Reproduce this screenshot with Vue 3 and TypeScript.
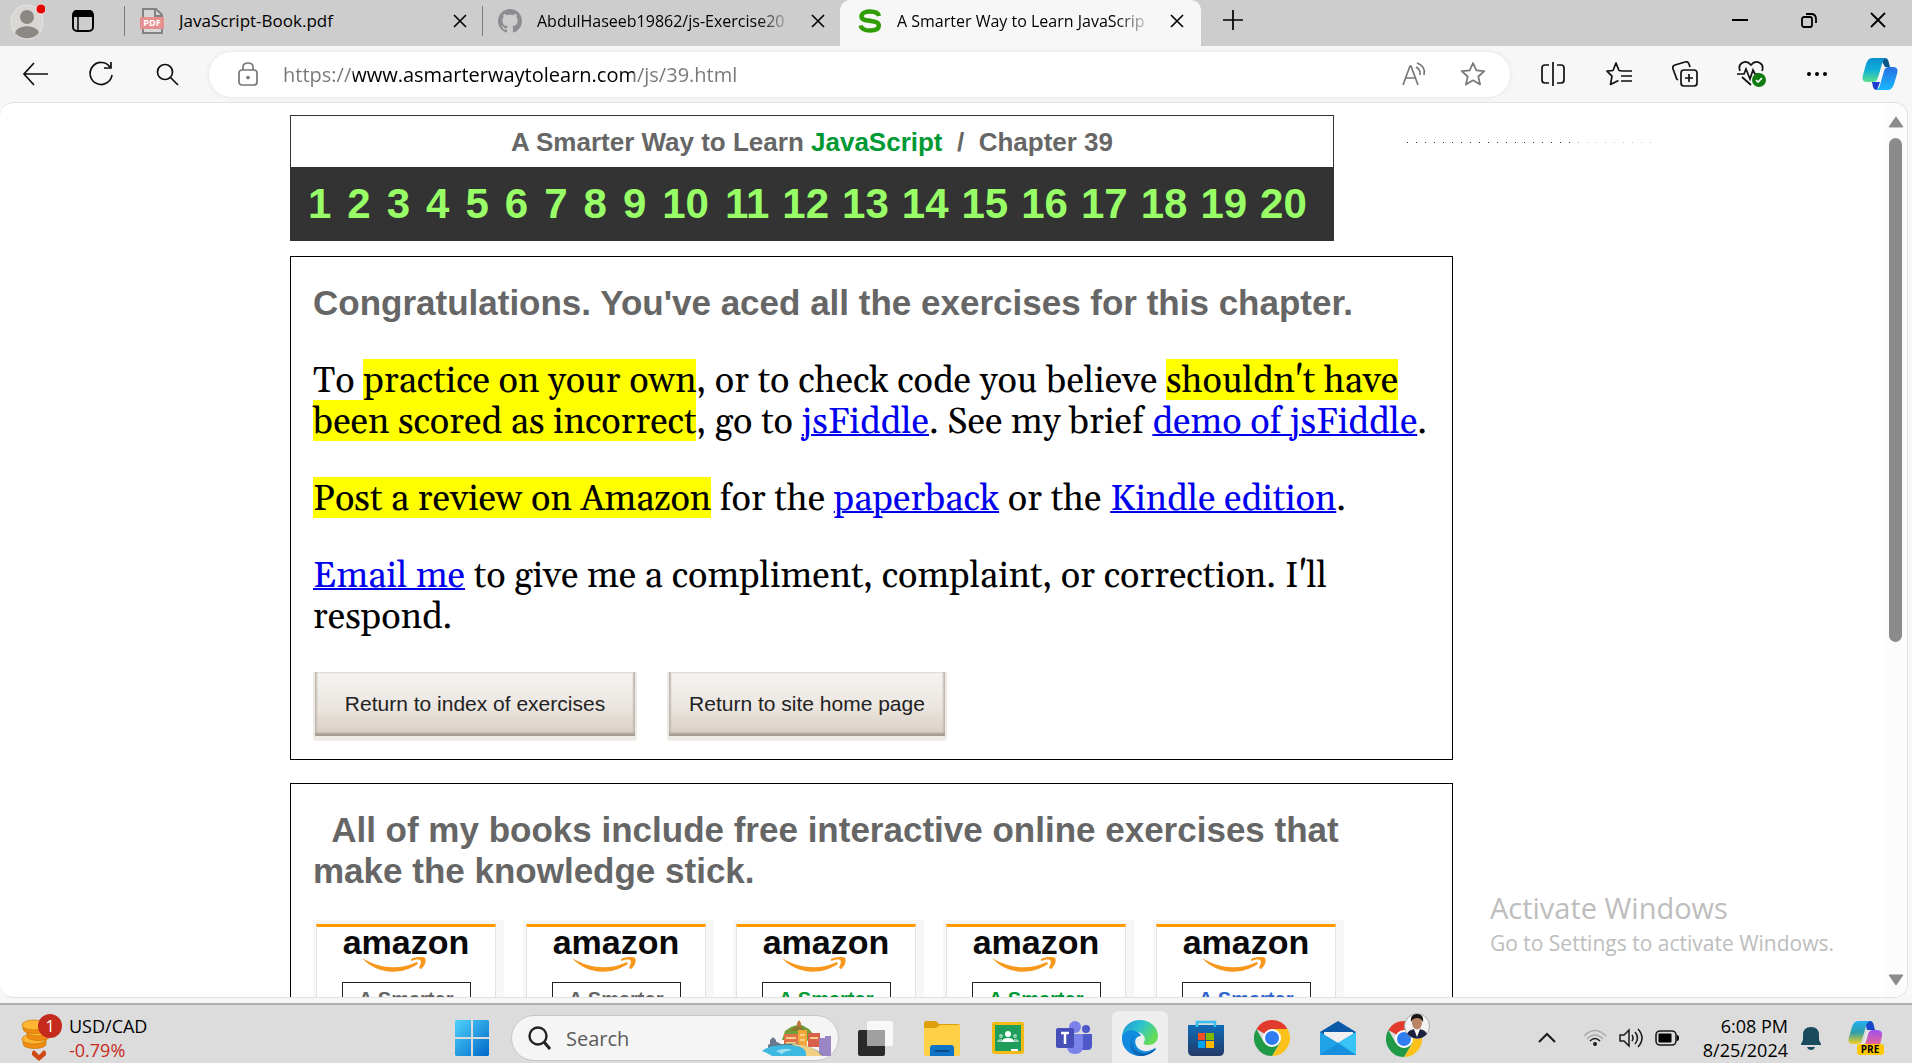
<script setup lang="ts">
import { ref } from 'vue'

interface Book {
  id: number
  tone: string
}

const exercises: number[] = Array.from({ length: 20 }, (_, i) => i + 1)
const address = ref('https://www.asmarterwaytolearn.com/js/39.html')
const query = ref('')
const books: Book[] = [
  { id: 1, tone: 'grey' },
  { id: 2, tone: 'grey' },
  { id: 3, tone: 'green' },
  { id: 4, tone: 'green' },
  { id: 5, tone: 'blue' },
]
</script>

<template>
  <div class="desktop">
    <header class="tabstrip">
      <button class="profile" aria-label="Profile">
        <svg width="44" height="44" viewBox="0 0 44 44">
          <ellipse cx="26" cy="22" rx="16" ry="17" fill="#d9d7d4" stroke="#e8e6e3" />
          <ellipse cx="26" cy="17" rx="7" ry="7" fill="#8c8884" />
          <path d="M14 33c2-9 22-9 24 0-6 7-18 7-24 0z" fill="#8c8884" />
          <circle cx="40" cy="9" r="5" fill="#e60000" stroke="#f0dede" />
        </svg>
      </button>
      <button class="tab-actions" aria-label="Tab actions">
        <svg width="24" height="24" viewBox="0 0 24 24">
          <rect x="2" y="2" width="20" height="20" rx="4" fill="none" stroke="#000" stroke-width="2" />
          <path d="M2 8V5q0-4 4-4h12q4 0 4 4v3z" />
          <path d="M7 8v14" stroke="#000" stroke-width="1.5" />
        </svg>
      </button>
      <nav class="tabs" aria-label="Tabs">
        <div class="tab">
          <svg width="24" height="26" viewBox="0 0 24 26">
            <path d="M3 1h13l6 6v18H3z" fill="#d6d6d6" stroke="#838383" stroke-width="2" />
            <path d="M15 1v7h7" fill="none" stroke="#838383" stroke-width="2" />
            <rect x="0" y="9" width="24" height="12" rx="1" fill="#e58f8f" />
            <text x="12" y="18" text-anchor="middle" font-size="9" font-weight="700" fill="#fff" font-family="Open Sans, sans-serif">PDF</text>
          </svg>
          <span class="tab-title">JavaScript-Book.pdf</span>
          <button class="close" aria-label="Close tab">
            <svg width="14" height="14" viewBox="0 0 14 14"><path d="M1 1l12 12M13 1L1 13" /></svg>
          </button>
        </div>
        <div class="tab">
          <svg width="24" height="24" viewBox="0 0 16 16">
            <path fill="#8b8d90" d="M8 0C3.58 0 0 3.58 0 8c0 3.54 2.29 6.53 5.47 7.59.4.07.55-.17.55-.38 0-.19-.01-.82-.01-1.49-2.01.37-2.53-.49-2.69-.94-.09-.23-.48-.94-.82-1.13-.28-.15-.68-.52-.01-.53.63-.01 1.08.58 1.23.82.72 1.21 1.87.87 2.33.66.07-.52.28-.87.51-1.07-1.78-.2-3.64-.89-3.64-3.95 0-.87.31-1.59.82-2.15-.08-.2-.36-1.02.08-2.12 0 0 .67-.21 2.2.82.64-.18 1.32-.27 2-.27s1.36.09 2 .27c1.53-1.04 2.2-.82 2.2-.82.44 1.1.16 1.92.08 2.12.51.56.82 1.27.82 2.15 0 3.07-1.87 3.75-3.65 3.95.29.25.54.73.54 1.48 0 1.07-.01 1.93-.01 2.2 0 .21.15.46.55.38A8.01 8.01 0 0 0 16 8c0-4.42-3.58-8-8-8z" />
          </svg>
          <span class="tab-title faded">AbdulHaseeb19862/js-Exercise20</span>
          <button class="close" aria-label="Close tab">
            <svg width="14" height="14" viewBox="0 0 14 14"><path d="M1 1l12 12M13 1L1 13" /></svg>
          </button>
        </div>
        <div class="tab active">
          <svg width="24" height="24" viewBox="0 0 24 24">
            <path d="M21 7C20 3 16 2.500 12 2.500S3.500 4 3.500 7.500 7 11 12 11.800s8.800 1.200 8.800 5-4 4.700-8.800 4.700S3.500 20 2.500 16.500" fill="none" stroke="#2f9e06" stroke-width="4.500" />
          </svg>
          <span class="tab-title faded">A Smarter Way to Learn JavaScrip</span>
          <button class="close" aria-label="Close tab">
            <svg width="14" height="14" viewBox="0 0 14 14"><path d="M1 1l12 12M13 1L1 13" /></svg>
          </button>
        </div>
      </nav>
      <button class="new-tab" aria-label="New tab">
        <svg width="22" height="22" viewBox="0 0 22 22"><path d="M11 1v20M1 11h20" stroke="#000" stroke-width="1.700" /></svg>
      </button>
      <div class="window-buttons">
        <button aria-label="Minimize">
          <svg width="16" height="16" viewBox="0 0 16 16"><path d="M0 8h16" stroke="#000" stroke-width="2" /></svg>
        </button>
        <button aria-label="Restore">
          <svg width="16" height="16" viewBox="0 0 16 16" fill="none" stroke="#000" stroke-width="1.800">
            <rect x="1" y="5" width="10" height="10" rx="2" /><path d="M5 2h5q5 0 5 5v4" />
          </svg>
        </button>
        <button aria-label="Close window">
          <svg width="16" height="16" viewBox="0 0 16 16"><path d="M1 1l14 14M15 1L1 15" stroke="#000" stroke-width="1.800" /></svg>
        </button>
      </div>
    </header>

    <div class="toolbar">
      <button aria-label="Back">
        <svg width="26" height="24" viewBox="0 0 26 24"><path d="M12 1L2 12l10 11M2 12h24" /></svg>
      </button>
      <button aria-label="Refresh">
        <svg width="26" height="26" viewBox="0 0 26 26"><path d="M22 6A11 11 0 1 0 24 14M23 1v6h-7" /></svg>
      </button>
      <button aria-label="Search the page">
        <svg width="24" height="24" viewBox="0 0 24 24"><circle cx="10" cy="10" r="7.500" /><path d="M15 15l8 8" /></svg>
      </button>
      <div class="omnibox">
        <svg class="dim" width="20" height="24" viewBox="0 0 20 24">
          <rect x="1" y="8" width="18" height="15" rx="3" /><path d="M5 8V5q0-4 5-4t5 4v3" /><circle cx="10" cy="15.500" r="1" fill="#666" />
        </svg>
        <input v-model="address" class="url" type="text" aria-label="Address" spellcheck="false" />
        <button aria-label="Read aloud">
          <svg class="dim" width="26" height="24" viewBox="0 0 26 24"><path d="M1 23L8 4h1l7 19M4 16h9M14 5q5 3 4 8M15 1q9 3 7 12" /></svg>
        </button>
        <button aria-label="Add to favorites">
          <svg class="dim" width="26" height="26" viewBox="0 0 26 26"><path d="M13 2l3.300 7.300 8 .8-6 5.400 1.800 8L13 19.300 5.900 23.500l1.800-8-6-5.400 8-.8z" stroke-linejoin="round" /></svg>
        </button>
      </div>
      <div class="tools">
        <button aria-label="Split screen">
          <svg width="26" height="26" viewBox="0 0 26 26"><path d="M9 4H5Q2 4 2 7v12q0 3 3 3h4M17 4h4q3 0 3 3v12q0 3-3 3h-4M13 1v24" /></svg>
        </button>
        <button aria-label="Favorites">
          <svg width="26" height="26" viewBox="0 0 26 26"><path d="M16 10l-3-.500L10 2 7 9.500l-6 .600 5 5-1.500 8.400 8-4M15 10h11M15 15h11M15 20h11" stroke-linejoin="round" /></svg>
        </button>
        <button aria-label="Collections">
          <svg width="26" height="26" viewBox="0 0 26 26"><rect x="9" y="9" width="16" height="16" rx="3" /><path d="M17 13v8M13 17h8M6 19q-2-1-2-3L1 8q-1-3 2-4l10-3q3-1 4 2l1 3" /></svg>
        </button>
        <button aria-label="Browser essentials">
          <svg width="30" height="28" viewBox="0 0 30 28">
            <path d="M4 11C1 3 10-1 15 5c5-6 14-2 11 6M1 14h7l2-5 4 10 3-9 2 4h4M6 17l9 8" />
            <circle cx="23" cy="20" r="7" fill="#107c10" stroke="none" /><path d="M20 20l2 2 4-4" stroke="#fff" />
          </svg>
        </button>
        <button aria-label="Settings and more">
          <svg width="22" height="6" viewBox="0 0 22 6"><g fill="#000" stroke="none"><circle cx="3" cy="3" r="2" /><circle cx="11" cy="3" r="2" /><circle cx="19" cy="3" r="2" /></g></svg>
        </button>
        <button aria-label="Copilot">
          <svg class="copilot" width="36" height="34" viewBox="0 0 36 34">
            <defs>
              <linearGradient id="cpA" x2="0" y2="1"><stop stop-color="#0a8fd0" /><stop offset=".5" stop-color="#10b0d8" /><stop offset="1" stop-color="#5fe08a" /></linearGradient>
              <linearGradient id="cpB" x2="0" y2="1"><stop stop-color="#2a6fe0" /><stop offset="1" stop-color="#18b8ff" /></linearGradient>
            </defs>
            <path d="M18 1h5q3 0 4 5l1 4h-5z" fill="#0b5a8c" />
            <path d="M10 25h8l-3 8q-3 0-4-3z" fill="#1a3fd0" />
            <path d="M10 1h14q-3 1-4 6l-4 14q-1 4-5 4H5q-6 0-4-7L4 7q2-6 6-6z" fill="url(#cpA)" />
            <path d="M26 33H14q3-1 4-5l4-14q1-4 5-4h4q6 0 4 7l-3 10q-2 6-6 6z" fill="url(#cpB)" />
            <path d="M20 10h4q-2 1-3 4l-2 7q-1 4-4 4h-2q2-1 3-4z" fill="#f7f7f7" />
          </svg>
        </button>
      </div>
    </div>

    <div class="viewport">
      <main class="page">
        <div class="column">
          <section class="banner">
            <h1>A Smarter Way to Learn <b>JavaScript</b>&nbsp; / &nbsp;Chapter 39</h1>
            <nav class="numbers" aria-label="Exercises">
              <a v-for="n in exercises" :key="n" href="#" :class="{ wide: n > 10 }">{{ n }}</a>
            </nav>
          </section>

          <section class="panel done">
            <h2>Congratulations. You've aced all the exercises for this chapter.</h2>
            <div class="notes">
              <p>
                To <mark>practice on your own</mark>, or to check code you believe <mark>shouldn't have been scored as
                incorrect</mark>, go to <a href="#">jsFiddle</a>. See my brief <a href="#">demo of jsFiddle</a>.
              </p>
              <p><mark>Post a review on Amazon</mark> for the <a href="#">paperback</a> or the <a href="#">Kindle edition</a>.</p>
              <p><a href="#">Email me</a> to give me a compliment, complaint, or correction. I'll respond.</p>
            </div>
            <div class="actions">
              <button class="index">Return to index of exercises</button>
              <button class="home">Return to site home page</button>
            </div>
          </section>

          <section class="panel books">
            <h2>&nbsp; All of my books include free interactive online exercises that make the knowledge stick.</h2>
            <div class="shelf">
              <a v-for="book in books" :key="book.id" href="#" class="frame">
                <span class="card">
                  <span class="amazon">amazon</span>
                  <svg class="smile" width="64" height="15" viewBox="0 0 64 15" fill="#f7981d">
                    <path d="M0 1c18 11 38 12 55 4l1 2C38 19 14 17 0 1z" />
                    <path d="M49 2c4-2 11-3 14-1 2 3-1 9-4 11l-2-1c1-3 3-7 1-8-2-1-6 0-9 1z" />
                  </svg>
                  <span class="cover" :class="book.tone">A Smarter</span>
                </span>
              </a>
            </div>
          </section>
        </div>
        <div class="dots"></div>
      </main>
      <div class="scrollbar">
        <svg width="16" height="12" viewBox="0 0 16 12"><path d="M8 1l7 10H1z" fill="#8b8b8b" stroke="#8b8b8b" stroke-linejoin="round" /></svg>
        <div class="track"><div class="thumb"></div></div>
        <svg width="16" height="12" viewBox="0 0 16 12"><path d="M8 11L1 1h14z" fill="#8b8b8b" stroke="#8b8b8b" stroke-linejoin="round" /></svg>
      </div>
      <div class="watermark">
        <p class="big">Activate Windows</p>
        <p>Go to Settings to activate Windows.</p>
      </div>
    </div>

    <footer class="taskbar">
      <button class="widget">
        <svg width="42" height="48" viewBox="0 0 42 48">
          <g stroke="#c97808" stroke-width=".7">
            <path d="M3 25v5c0 6 23 6 23 0v-5z" fill="#f08c12" /><ellipse cx="14" cy="25" rx="12" ry="5" fill="#ffb733" />
            <path d="M7 17v5c0 6 23 6 23 0v-5z" fill="#f08c12" /><ellipse cx="18" cy="17" rx="12" ry="5" fill="#ffb733" />
            <path d="M3 11v4c0 6 23 6 23 0v-4z" fill="#f08c12" /><ellipse cx="14" cy="11" rx="12" ry="5" fill="#ffb733" />
          </g>
          <path d="M12 38l2-2 5 5 5-5 2 2v3l-7 6-7-6z" fill="#d04a18" />
          <ellipse cx="30" cy="12" rx="12" ry="12" fill="#c42b1c" />
          <text x="30" y="18" text-anchor="middle" font-size="16" fill="#fff" font-family="Open Sans, sans-serif">1</text>
        </svg>
        <span class="quote"><span>USD/CAD</span><span class="down">-0.79%</span></span>
      </button>

      <div class="apps">
        <button class="app start" aria-label="Start">
          <svg width="34" height="36" viewBox="0 0 34 36">
            <defs><linearGradient id="win" x2="1" y2="1"><stop stop-color="#4fd3fc" /><stop offset="1" stop-color="#0067c8" /></linearGradient></defs>
            <path d="M1 0h15v17H0V1zM18 0h15l1 1v16H18zM0 19h16v17H1l-1-1zM18 19h16v16l-1 1H18z" fill="url(#win)" />
          </svg>
        </button>
        <label class="search">
          <svg width="24" height="24" viewBox="0 0 24 24" fill="none" stroke="#222" stroke-width="2.400"><circle cx="10" cy="10" r="8.500" /><path d="M16 16l6 7" stroke-width="3" /></svg>
          <input v-model="query" type="text" placeholder="Search" />
          <svg width="70" height="36" viewBox="0 0 70 36">
            <path d="M20 20l3-9 6-4 9-3 9 5 10 12z" fill="#6f9f35" />
            <path d="M37 0l2 3v4h-4V3z" fill="#b77940" /><path d="M28 11l4-4 8 0 4 4z" fill="#8a7a30" />
            <path d="M22 14h14v14H22z" fill="#e0704a" /><path d="M36 10h9v16h-9z" fill="#f2a73d" /><path d="M46 13h12v14H46z" fill="#d9604a" />
            <path d="M57 18h6v-2h6v20H57z" fill="#9a86c4" />
            <path d="M24 17h10v2H24zM24 22h10v2H24zM38 14h5v2h-5zM38 19h5v2h-5zM48 17h8v2h-8z" fill="#f8d08a" />
            <path d="M8 20l3-3 3 3v7H8zM6 25l7-4 8 4v4H6z" fill="#6b7890" />
            <path d="M8 27q24-8 44 2 6 3 8 6H18z" fill="#557f86" />
            <path d="M30 24q20 0 30 12H40z" fill="#f3cf83" />
            <path d="M0 31q6-6 24-6 22 0 20 11H10q-4-3-10-5z" fill="#3db8e0" />
            <path d="M14 31q10-4 16-1-8 1-10 4z" fill="#9be2f2" />
          </svg>
        </label>
        <button class="app" aria-label="Task view">
          <svg width="36" height="36" viewBox="0 0 36 36"><rect y="10" width="27" height="26" rx="2" fill="#2a2a2a" /><rect x="9" y="1" width="26" height="25" rx="2" fill="#f8f8f8" /><path d="M9 10h18v16H10q-1 0-1-1z" fill="#a0a0a0" /></svg>
        </button>
        <button class="app" aria-label="File Explorer">
          <svg width="36" height="36" viewBox="0 0 36 36"><path d="M0 3q0-2 2-2h9q2 0 4 3h19q2 0 2 2v6H0z" fill="#dd9f0c" /><path d="M0 8h12l4-3h20v29q0 2-2 2H2q-2 0-2-2z" fill="#ffcf45" /><path d="M6 36v-8q0-3 3-3h18q3 0 3 3v8z" fill="#0f74c8" /><path d="M11 31h14" stroke="#084a8a" stroke-width="2" /></svg>
        </button>
        <button class="app" aria-label="Classroom">
          <svg width="34" height="34" viewBox="0 0 34 34"><rect x="1" y="1" width="32" height="32" rx="2" fill="#f5ba15" /><rect x="4" y="4" width="26" height="26" fill="#1e9e5a" /><circle cx="17" cy="13" r="3" fill="#fff" /><path d="M11 21q0-4 6-4t6 4z" fill="#fff" /><g fill="#9bd3b2"><circle cx="10" cy="15" r="2" /><circle cx="24" cy="15" r="2" /><path d="M6 21q0-3 5-3v3zM28 21q0-3-5-3v3z" /></g><path d="M20 29h7" stroke="#fff" stroke-width="2" /></svg>
        </button>
        <button class="app" aria-label="Teams">
          <svg width="36" height="36" viewBox="0 0 36 36"><circle cx="19" cy="7" r="6" fill="#7b83eb" /><circle cx="30" cy="9" r="4" fill="#5059c9" /><path d="M25 14h11v12q0 4-5 4h-6z" fill="#5059c9" /><path d="M11 14h16v12q0 8-8 8t-8-8z" fill="#7b83eb" /><rect y="8" width="18" height="20" rx="2" fill="#464eb8" /><path d="M5 13h8M9 13v11" stroke="#fff" stroke-width="2.500" /></svg>
        </button>
        <button class="app current" aria-label="Edge">
          <svg width="36" height="36" viewBox="0 0 36 36">
            <defs>
              <linearGradient id="eg" x2="1" y2=".5"><stop stop-color="#1b8fd8" /><stop offset=".5" stop-color="#2cc3d0" /><stop offset="1" stop-color="#66dc55" /></linearGradient>
              <linearGradient id="eb" x2="1" y2="1"><stop stop-color="#1088dc" /><stop offset="1" stop-color="#0b4d9a" /></linearGradient>
            </defs>
            <path d="M0 16C1 6 9 0 18 0c11 0 18 8 18 16 0 6-5 9-10 9-4 0-5-1-4-3 3-5-2-10-8-10-7 0-13 5-14 8z" fill="url(#eg)" />
            <path d="M0 17c2-6 8-8 13-6 4 1 6 4 6 5-5 0-7 5-5 9 3 7 12 8 19 3 1 0 1 0 0 2-4 4-10 6-15 6C8 36-1 28 0 17z" fill="#118be0" />
            <path d="M14 15c-5 4-4 11 0 15 6 6 14 3 19-1q2 0 0 1c-4 4-10 6-15 6-6-1-10-5-10-11 0-5 3-9 6-10z" fill="url(#eb)" />
          </svg>
        </button>
        <button class="app" aria-label="Store">
          <svg width="36" height="36" viewBox="0 0 36 36"><defs><linearGradient id="st" x2="0" y2="1"><stop stop-color="#0f6cb8" /><stop offset="1" stop-color="#243a66" /></linearGradient></defs><path d="M9 8V2h18v6" fill="none" stroke="#35c0f0" stroke-width="2.500" /><path d="M0 5h36v26q0 5-5 5H5q-5 0-5-5z" fill="url(#st)" /><path d="M9 7V5M27 7V5" stroke="#35c0f0" stroke-width="2.500" /><path d="M10 13h7v7h-7z" fill="#f25022" /><path d="M18 13h8v7h-8z" fill="#7fba00" /><path d="M10 21h7v7h-7z" fill="#00a4ef" /><path d="M18 21h8v7h-8z" fill="#ffb900" /></svg>
        </button>
        <button class="app" aria-label="Chrome">
          <svg width="36" height="36" viewBox="0 0 36 36"><path d="M18 18L2.400 9A18 18 0 0 1 33.600 9z" fill="#e23b2e" /><path d="M18 9h15.600A18 18 0 0 1 18 36l8-13z" fill="#fcc21b" /><path d="M2.400 9A18 18 0 0 0 18 36l8-13.500H10z" fill="#219a48" /><circle cx="18" cy="18" r="9" fill="#fff" /><circle cx="18" cy="18" r="7" fill="#2f7df0" /></svg>
        </button>
        <button class="app" aria-label="Mail">
          <svg width="36" height="36" viewBox="0 0 36 36"><path d="M0 12L18 1l18 11v4H0z" fill="#0a5aa8" /><path d="M4 12h29v10H4z" fill="#f0f0f0" /><path d="M0 12l18 11L36 12v23H0z" fill="#1fa3e6" /><path d="M18 23l18-11v23z" fill="#38c4f4" /><path d="M0 35l18-12 18 12z" fill="#1690dc" /></svg>
        </button>
        <button class="app personal" aria-label="Chrome, personal profile">
          <svg width="46" height="46" viewBox="0 0 46 46"><g transform="translate(0 9)"><path d="M18 18L2.400 9A18 18 0 0 1 33.600 9z" fill="#e23b2e" /><path d="M18 9h15.600A18 18 0 0 1 18 36l8-13z" fill="#fcc21b" /><path d="M2.400 9A18 18 0 0 0 18 36l8-13.500H10z" fill="#219a48" /><circle cx="18" cy="18" r="9" fill="#fff" /><circle cx="18" cy="18" r="7" fill="#2f7df0" /></g><circle cx="31" cy="14" r="12.500" fill="#f2f2f2" stroke="#aaa" /><path d="M21 22q2-5 10-5t10 5q-9 9-20 0z" fill="#1c2140" /><path d="M28 17h6l-3 8z" fill="#fff" /><ellipse cx="31" cy="11" rx="5" ry="6.500" fill="#b98463" /><path d="M25 10q-1-8 6-8t6 8q-2-4-6-4t-6 4z" fill="#1a1414" /></svg>
        </button>
      </div>

      <div class="tray">
        <button aria-label="Show hidden icons"><svg width="18" height="12" viewBox="0 0 18 12"><path d="M1 10l8-8 8 8" fill="none" stroke="#1a1a1a" stroke-width="2" /></svg></button>
        <button class="status" aria-label="Network, sound and battery">
          <svg width="24" height="18" viewBox="0 0 24 18" fill="none" stroke-width="1.500"><path d="M1 7q11-11 22 0" stroke="#aaa" /><path d="M4 10q8-8 16 0" stroke="#aaa" /><path d="M7 12q5-5 10 0" stroke="#1a1a1a" /><circle cx="12" cy="15" r="2" fill="#1a1a1a" stroke="none" /></svg>
          <svg width="24" height="20" viewBox="0 0 24 20" fill="none" stroke="#1a1a1a" stroke-width="1.500"><path d="M1 7h4l5-5v16l-5-5H1zM13 7q2 3 0 6M16 4q5 6 0 12M19 1q8 9 0 18" /></svg>
          <svg width="24" height="16" viewBox="0 0 24 16"><rect x="1" y="1" width="20" height="14" rx="4" fill="none" stroke="#1a1a1a" stroke-width="1.600" /><rect x="3.500" y="3.500" width="13" height="9" rx="1" /><path d="M22 5q2 0 2 3t-2 3z" /></svg>
        </button>
        <button class="clock"><span>6:08 PM</span><span>8/25/2024</span></button>
        <button aria-label="Notifications"><svg width="20" height="24" viewBox="0 0 20 24" fill="#194b5c"><path d="M0 18l2-4V9q0-8 8-8t8 8v5l2 4v1H0zM6 21h8q-1 3-4 3t-4-3z" /></svg></button>
        <button aria-label="Copilot preview">
          <svg width="36" height="36" viewBox="0 0 36 36">
            <defs>
              <linearGradient id="pa" x2="0" y2="1"><stop stop-color="#22b0f4" /><stop offset=".5" stop-color="#2f9fa8" /><stop offset="1" stop-color="#f4d020" /></linearGradient>
              <linearGradient id="pb" x2="0" y2="1"><stop stop-color="#a050f0" /><stop offset="1" stop-color="#ff7070" /></linearGradient>
            </defs>
            <path d="M17 1h5q3 0 4 5l1 4h-8z" fill="#1548c8" />
            <path d="M10 1h12q-3 1-4 5l-4 14q-1 4-5 4H5q-6 0-4-7L4 7q2-6 6-6z" fill="url(#pa)" />
            <path d="M26 30H12q4-1 5-5l3-11q1-4 5-4h4q6 0 5 6l-2 9q-2 5-6 5z" fill="url(#pb)" />
            <path d="M19 10h4q-2 1-3 4l-2 7q-1 3-4 3h-1q2-1 3-4z" fill="#e4e4e4" />
            <rect x="9" y="24" width="27" height="11" rx="3" fill="#ffc800" />
            <text x="22" y="33" text-anchor="middle" font-size="10" font-weight="700" font-family="Open Sans, sans-serif">PRE</text>
          </svg>
        </button>
      </div>
    </footer>
  </div>
</template>

<style>
body {
  margin: 0;
}
</style>

<style scoped>
.desktop {
  display: flex;
  flex-direction: column;
  height: 100vh;
  overflow: hidden;
  background: #f7f7f7;
  font-family: 'Open Sans', 'Noto Sans', sans-serif;
  color: #000;
}
button {
  display: flex;
  align-items: center;
  justify-content: center;
  padding: 0;
  border: 0;
  background: none;
  color: inherit;
  font: inherit;
}
svg {
  flex: none;
}
h1,
h2,
p {
  margin: 0;
}

/* tab strip */
.tabstrip {
  display: flex;
  align-items: flex-start;
  height: 46px;
  background: #cdcdcd;
}
.profile {
  width: 46px;
}
.tab-actions {
  width: 28px;
  height: 41px;
  margin: 0 27px 0 23px;
}
.tabs {
  display: flex;
}
.tab {
  display: flex;
  align-items: center;
  box-sizing: border-box;
  width: 358px;
  height: 41px;
  padding: 0 12px 0 16px;
  gap: 15px;
  font-size: 17px;
  background: linear-gradient(#7c7c7c, #7c7c7c) 0 6px / 1px 30px no-repeat;
}
.tab.active {
  width: 361px;
  height: 46px;
  padding: 0 14px 5px 18px;
  border-radius: 10px 10px 0 0;
  background: #f7f7f7;
}
.tab-title {
  flex: 1;
  min-width: 0;
  overflow: hidden;
  white-space: nowrap;
}
.faded {
  font-size: 16px;
  mask-image: linear-gradient(90deg, #000 86%, transparent);
}
.close {
  width: 20px;
  height: 20px;
}
.close svg {
  stroke: #000;
  stroke-width: 1.6;
}
.new-tab {
  width: 64px;
  height: 40px;
}
.window-buttons {
  display: flex;
  margin-left: auto;
}
.window-buttons button {
  width: 69px;
  height: 40px;
}

/* toolbar */
.toolbar {
  display: flex;
  align-items: center;
  height: 56px;
  padding: 0 2px;
  box-sizing: border-box;
}
.toolbar svg {
  fill: none;
  stroke: #111;
  stroke-width: 1.7;
}
.toolbar svg.dim {
  stroke: #777;
}
.toolbar svg.copilot {
  stroke: none;
}
.toolbar > button {
  width: 66px;
  height: 40px;
}
.omnibox {
  display: flex;
  flex: 1;
  align-items: center;
  height: 45px;
  margin-left: 9px;
  padding: 0 8px 0 29px;
  border-radius: 23px;
  background: #fff;
  box-shadow: 0 0 5px #e2e2e2;
}
.omnibox button {
  width: 58px;
  height: 40px;
}
.url {
  flex: 1;
  min-width: 0;
  margin-left: 25px;
  padding: 0;
  border: 0;
  outline: 0;
  font: 20px 'Open Sans', 'Noto Sans', sans-serif;
  color: transparent;
  background: linear-gradient(90deg, #777 70px, #000 70px, #000 351px, #777 351px);
  background-clip: text;
}
.tools {
  display: flex;
  margin-left: 10px;
}
.tools button {
  width: 66px;
  height: 40px;
}
.tools button:last-child {
  width: 60px;
}

/* browser viewport */
.viewport {
  position: relative;
  display: flex;
  flex: 1;
  min-height: 0;
  margin-right: 4px;
  overflow: hidden;
  border: 1px solid #e2e2e2;
  border-left: 0;
  border-radius: 14px;
  background: #fff;
}
.page {
  display: grid;
  flex: 1;
  grid-template-columns: minmax(0, 290px) minmax(0, 1163px) minmax(0, 1fr);
  overflow: hidden;
}
.column {
  grid-column: 2;
  padding-top: 12px;
}
.banner {
  box-sizing: border-box;
  max-width: 1044px;
  height: 126px;
  margin-bottom: 15px;
  border: 1px solid #333;
  background: #333;
}
.banner h1 {
  height: 51px;
  background: #fff;
  color: #666;
  text-align: center;
  font: bold 26px/52px 'Liberation Sans', Arial, sans-serif;
}
.banner b {
  color: #093;
}
.numbers {
  display: flex;
  padding-left: 17px;
  gap: 13px;
  font: bold 42px/74px 'Liberation Sans', Arial, sans-serif;
}
.numbers a {
  margin-right: 3px;
  color: #9f6;
  text-decoration: none;
}
.numbers a.wide {
  margin-right: 0;
}
.panel {
  box-sizing: border-box;
  padding: 25px 22px 18px;
  border: 1px solid #000;
}
.panel h2 {
  color: #666;
  font: bold 35px/41px 'Liberation Sans', Arial, sans-serif;
}
.notes {
  padding-top: 2px;
}
.notes p {
  margin-top: 36px;
  font: 36px/41px Georgia, Gelasio, 'Liberation Serif', serif;
}
.notes a {
  color: #00e;
  text-decoration-thickness: 2px;
}
mark {
  background: linear-gradient(#ff0, #ff0) 0 calc(50% - 2px) / 100% 41px no-repeat;
  box-decoration-break: clone;
  -webkit-box-decoration-break: clone;
}
.actions {
  display: flex;
  gap: 30px;
  margin-top: 34px;
}
.actions button {
  height: 69px;
  border: solid #eeeae6;
  border-width: 0 2px 5px;
  border-radius: 0 0 4px 4px;
  background: linear-gradient(#f6f3f1, #ebe6e0 55%, #d8ccc0);
  box-shadow: inset 0 -3px 2px #a79c92, inset 2px 0 2px #c8c0b8, inset -2px 0 2px #c8c0b8;
  color: #222;
  font: 21px 'Liberation Sans', Arial, sans-serif;
}
.actions .index {
  width: 324px;
}
.actions .home {
  width: 280px;
}
.books {
  margin-top: 23px;
}
.shelf {
  display: flex;
  gap: 19px;
  margin-top: 29px;
}
.frame {
  box-sizing: border-box;
  width: 191px;
  height: 300px;
  padding: 4px 8px 0 3px;
  background: #f7f7f7;
  text-decoration: none;
}
.card {
  display: flex;
  flex-direction: column;
  align-items: center;
  box-sizing: border-box;
  height: 290px;
  border: 1px solid #e2e2e2;
  border-top: 3px solid #f90;
  background: #fff;
}
.amazon {
  color: #0a0a0a;
  font: bold 34px/30px 'Liberation Sans', Arial, sans-serif;
}
.smile {
  margin-right: 24px;
}
.cover {
  box-sizing: border-box;
  width: 129px;
  height: 160px;
  margin-top: 10px;
  padding-top: 5px;
  border: 1px solid #222;
  text-align: center;
  font: bold 20px/23px 'Liberation Sans', Arial, sans-serif;
}
.grey {
  color: #666;
}
.green {
  color: #093;
}
.blue {
  color: #36c;
}
.dots {
  width: 247px;
  height: 1px;
  margin: 39px 0 0 -46px;
  justify-self: start;
  background: repeating-linear-gradient(90deg, #333 0 1px, transparent 1px 9px);
  mask-image: linear-gradient(90deg, #000 68%, rgb(0 0 0 / 30%) 70%);
}
.scrollbar {
  display: flex;
  flex-direction: column;
  align-items: center;
  width: 23px;
  padding: 13px 0 11px;
  box-sizing: border-box;
  background: #fcfcfc;
}
.track {
  flex: 1;
  margin: 10px 0;
}
.thumb {
  width: 13px;
  height: 61%;
  border-radius: 7px;
  background: #8b8b8b;
}
.watermark {
  position: absolute;
  right: 73px;
  bottom: 40px;
  color: #bdbdbd;
  font-size: 21px;
  line-height: 28px;
}
.watermark .big {
  font-size: 29px;
  line-height: 43px;
}

/* taskbar */
.taskbar {
  display: flex;
  align-items: center;
  box-sizing: border-box;
  height: 60px;
  margin-top: 5px;
  padding: 8px 28px 0 20px;
  border-top: 2px solid #b0b0b0;
  background: #dcdcdc;
  font-size: 18px;
}
.widget {
  gap: 7px;
  width: 419px;
  justify-content: flex-start;
}
.quote,
.clock {
  display: flex;
  flex-direction: column;
  line-height: 24px;
}
.quote {
  align-items: flex-start;
}
.down {
  color: #c42b1c;
}
.apps {
  display: flex;
  align-items: center;
}
.app {
  width: 56px;
  height: 54px;
  margin-right: 10px;
}
.app.start {
  width: 66px;
  margin-right: 6px;
}
.app.current {
  border-radius: 6px 6px 0 0;
  background: #eee;
}
.app.personal {
  width: 66px;
  padding-bottom: 6px;
}
.search {
  display: flex;
  align-items: center;
  box-sizing: border-box;
  width: 328px;
  height: 46px;
  margin-right: 9px;
  padding: 0 6px 0 16px;
  border: 1px solid #c6c6c6;
  border-radius: 23px;
  background: #f5f5f5;
}
.search input {
  flex: 1;
  min-width: 0;
  margin-left: 14px;
  padding: 0;
  border: 0;
  outline: 0;
  background: none;
  font: 20px 'Open Sans', 'Noto Sans', sans-serif;
}
.search input::placeholder {
  color: #5c5c5c;
}
.tray {
  display: flex;
  align-items: center;
  margin-left: auto;
}
.status {
  gap: 12px;
  margin: 0 24px 0 27px;
}
.clock {
  align-items: flex-end;
  margin-right: 13px;
}
.tray button:last-child {
  margin-left: 27px;
}
</style>
